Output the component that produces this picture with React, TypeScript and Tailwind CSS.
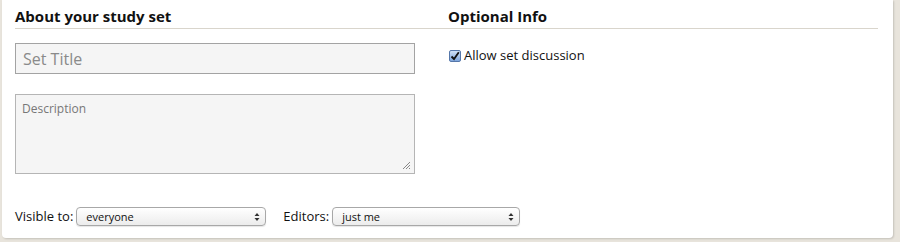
export default function App() {
  return (
    <div className="w-[900px] h-[242px] bg-[#e8e4dc] pl-[2px] font-['Open_Sans',sans-serif]">
      <div className="w-[891px] h-[238px] bg-white rounded-b-[4px] shadow-[1px_1px_2px_rgba(0,0,0,0.15)] px-[13px] pt-[6px]">
        <div className="flex">
          <div className="w-[433px]">
            <h2 className="text-[15px] font-bold text-[#111] leading-[20px] pb-[2px] border-b border-[#d9d5cc]">
              About your study set
            </h2>
          </div>
          <div className="w-[430px]">
            <h2 className="text-[15px] font-bold text-[#111] leading-[20px] pb-[2px] border-b border-[#d9d5cc]">
              Optional Info
            </h2>
          </div>
        </div>
        <div className="flex">
          <div className="w-[433px]">
            <div className="mt-[14px] w-[400px] h-[31px] border border-[#a3a3a3] bg-[#f5f5f5] px-[7px] flex items-center text-[16px] text-[#8a8a8a]">
              Set Title
            </div>
            <div className="relative mt-[20px] w-[400px] h-[80px] border border-[#b5b5b5] bg-[#f5f5f5] px-[6px] pt-[5px] text-[12px] text-[#777]">
              Description
              <svg className="absolute right-[3px] bottom-[3px]" width="9" height="9" viewBox="0 0 9 9">
                <path d="M8 1L1 8M8 4L4 8M8 7L7 8" stroke="#888" strokeWidth="1" />
              </svg>
            </div>
          </div>
          <div className="w-[430px] pt-[17px] pl-[1px]">
            <label className="flex items-center gap-[3px] text-[13px] text-[#111]">
              <span className="w-[12px] h-[12px] rounded-[2px] border border-[#5577aa] bg-gradient-to-b from-[#cfe0f5] to-[#7fa6dc] flex items-center justify-center">
                <svg width="10" height="10" viewBox="0 0 10 10">
                  <path d="M1.5 5.5L4 8L8.8 1.2" stroke="#111" strokeWidth="1.8" fill="none" />
                </svg>
              </span>
              Allow set discussion
            </label>
          </div>
        </div>
        <div className="mt-[33px] flex items-center text-[13px] text-[#111]">
          <span>Visible to:</span>
          <div className="ml-[3px] w-[190px] h-[19px] rounded-[4px] border border-[#a8a8a8] bg-gradient-to-b from-white to-[#ececec] shadow-[0_1px_1px_rgba(0,0,0,0.1)] flex items-center justify-between pl-[9px] pr-[5px] text-[11px]">
            everyone
            <Arrows />
          </div>
          <span className="ml-[17px]">Editors:</span>
          <div className="ml-[3px] w-[188px] h-[19px] rounded-[4px] border border-[#a8a8a8] bg-gradient-to-b from-white to-[#ececec] shadow-[0_1px_1px_rgba(0,0,0,0.1)] flex items-center justify-between pl-[9px] pr-[5px] text-[11px]">
            just me
            <Arrows />
          </div>
        </div>
      </div>
    </div>
  );
}

function Arrows() {
  return (
    <svg width="6" height="10" viewBox="0 0 6 10">
      <path d="M3 1L5.5 4H0.5Z M3 9L5.5 6H0.5Z" fill="#333" />
    </svg>
  );
}
